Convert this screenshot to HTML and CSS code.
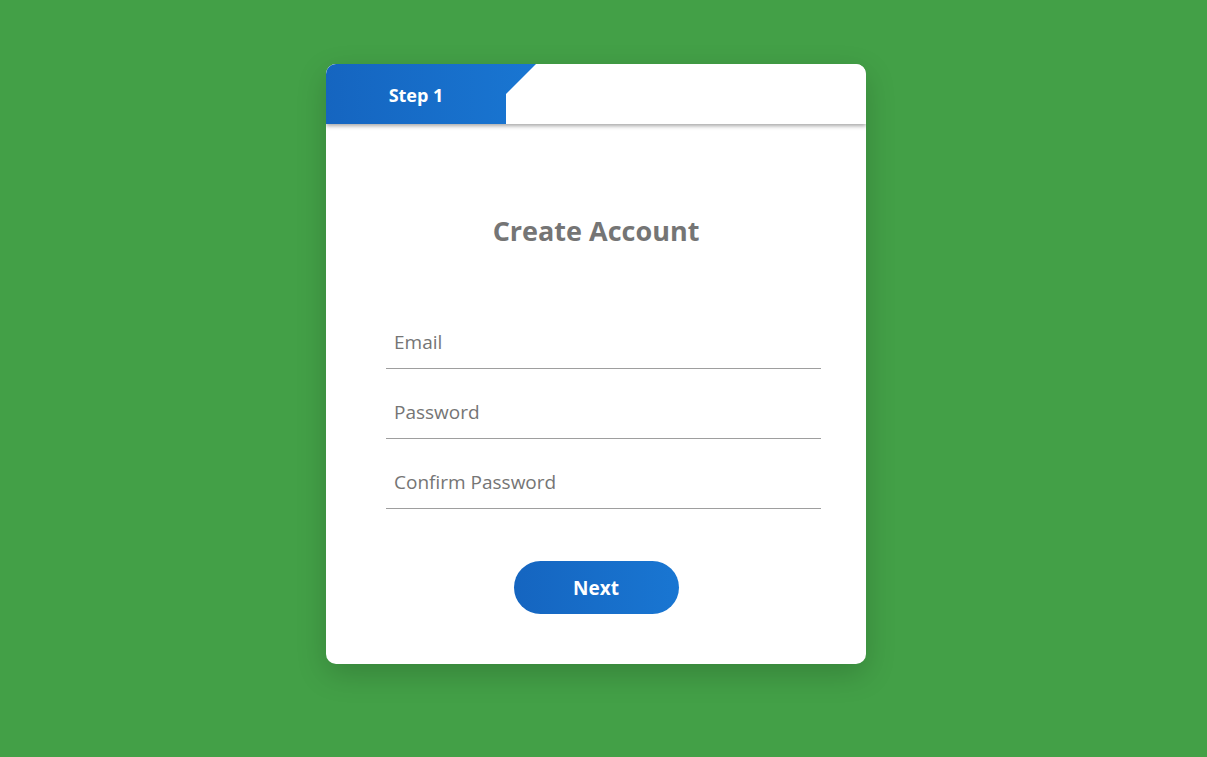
FILE: index.html
```html
<!DOCTYPE html>
<html lang="en">
<head>
<meta charset="utf-8">
<title>Create Account</title>
<link rel="stylesheet" href="styles.css">
</head>
<body>
<div class="page">
  <div class="card">
    <div class="card-header">
      <div class="tab">Step 1</div>
    </div>
    <form class="card-body">
      <h1 class="title">Create Account</h1>
      <input class="field" type="email" placeholder="Email" autofocus>
      <input class="field" type="password" placeholder="Password">
      <input class="field" type="password" placeholder="Confirm Password">
      <div class="actions">
        <button class="btn" type="button">Next</button>
      </div>
    </form>
  </div>
</div>
</body>
</html>
```

FILE: styles.css
```css
* { box-sizing: border-box; }
html, body { margin: 0; height: 100%; }
body {
  background: #43a047;
  font-family: "Open Sans", "Noto Sans", sans-serif;
}
.page {
  display: flex;
  justify-content: center;
  padding: 64px 15px 0 0;
}
.card {
  width: 540px;
  background: #fff;
  border-radius: 10px;
  overflow: hidden;
  box-shadow: 0 10px 30px rgba(0,0,0,0.18);
}
.card-header {
  height: 60px;
  background: #fff;
  box-shadow: 0 2px 4px rgba(0,0,0,0.35);
  position: relative;
  z-index: 1;
}
.tab {
  width: 210px;
  height: 60px;
  padding-right: 30px;
  padding-top: 2px;
  background: linear-gradient(90deg, #1565c0, #1976d2);
  clip-path: polygon(0 0, 210px 0, 180px 30px, 180px 60px, 0 60px);
  color: #fff;
  font-weight: 700;
  font-size: 18px;
  display: flex;
  align-items: center;
  justify-content: center;
}
.card-body {
  display: flex;
  flex-direction: column;
  padding: 92px 45px 50px 60px;
}
.title {
  margin: 0 0 53px -15px;
  text-align: center;
  font-size: 27px;
  line-height: 30px;
  font-weight: 700;
  color: #757575;
}
.field {
  height: 51px;
  margin-top: 19px;
  border: 0;
  border-bottom: 1px solid #9e9e9e;
  padding: 0 8px 3px;
  font-family: inherit;
  font-size: 19px;
  color: #616161;
  outline: none;
  background: transparent;
  caret-color: #212121;
}
.field::placeholder { color: #757575; }
.actions {
  display: flex;
  justify-content: center;
  margin: 52px 0 0 -15px;
}
.btn {
  width: 165px;
  height: 53px;
  border: 0;
  border-radius: 27px;
  background: linear-gradient(90deg, #1565c0, #1976d2);
  color: #fff;
  font-family: inherit;
  font-weight: 700;
  font-size: 19px;
  cursor: pointer;
}
```
